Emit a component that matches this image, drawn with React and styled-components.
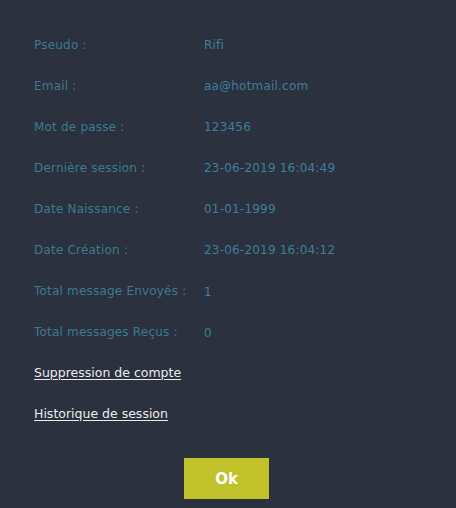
import { Fragment } from 'react'
import styled, { createGlobalStyle } from 'styled-components'

const GlobalStyle = createGlobalStyle`
  html, body {
    margin: 0;
    padding: 0;
    background: #2b313e;
  }
  body {
    font-family: "DejaVu Sans", "Liberation Sans", sans-serif;
  }
`

const Page = styled.div`
  width: 456px;
  height: 508px;
  background: #2b313e;
  box-sizing: border-box;
  padding: 24px 0 0 34px;
  display: flex;
  flex-direction: column;
`

const InfoList = styled.dl`
  display: grid;
  grid-template-columns: 170px 1fr;
  grid-auto-rows: 41px;
  align-items: center;
  margin: 0;
`

const Label = styled.dt`
  color: #3b7b8c;
  font-size: 12px;
  letter-spacing: 0.2px;
`

const Value = styled.dd`
  margin: 0;
  color: #3e7f9b;
  font-size: 12px;
  letter-spacing: 0.2px;
  padding-top: ${p => (p.$low ? '3px' : '0')};
`

const LinkRow = styled.div`
  height: 41px;
  display: flex;
  align-items: center;
`

const Link = styled.a`
  color: #ececec;
  font-size: 12.5px;
  text-decoration: underline;
  text-underline-offset: 2px;
  cursor: pointer;
`

const Footer = styled.div`
  display: flex;
  justify-content: center;
  padding: 24px 34px 0 0;
`

const OkButton = styled.button`
  width: 85px;
  height: 41px;
  margin-left: -3px;
  border: none;
  background: #c1c12b;
  color: #ffffff;
  font-family: "DejaVu Sans", sans-serif;
  font-weight: bold;
  font-size: 15px;
  cursor: pointer;
`

const infos = [
  ['Pseudo :', 'Rifi'],
  ['Email :', 'aa@hotmail.com'],
  ['Mot de passe :', '123456'],
  ['Dernière session :', '23-06-2019 16:04:49'],
  ['Date Naissance :', '01-01-1999'],
  ['Date Création :', '23-06-2019 16:04:12'],
  ['Total message Envoyés :', '1', true],
  ['Total messages Reçus :', '0', true],
]

export default function App() {
  return (
    <Page>
      <GlobalStyle />
      <InfoList>
        {infos.map(([label, value, low]) => (
          <Fragment key={label}>
            <Label>{label}</Label>
            <Value $low={low}>{value}</Value>
          </Fragment>
        ))}
      </InfoList>
      <LinkRow>
        <Link>Suppression de compte</Link>
      </LinkRow>
      <LinkRow>
        <Link>Historique de session</Link>
      </LinkRow>
      <Footer>
        <OkButton>Ok</OkButton>
      </Footer>
    </Page>
  )
}
